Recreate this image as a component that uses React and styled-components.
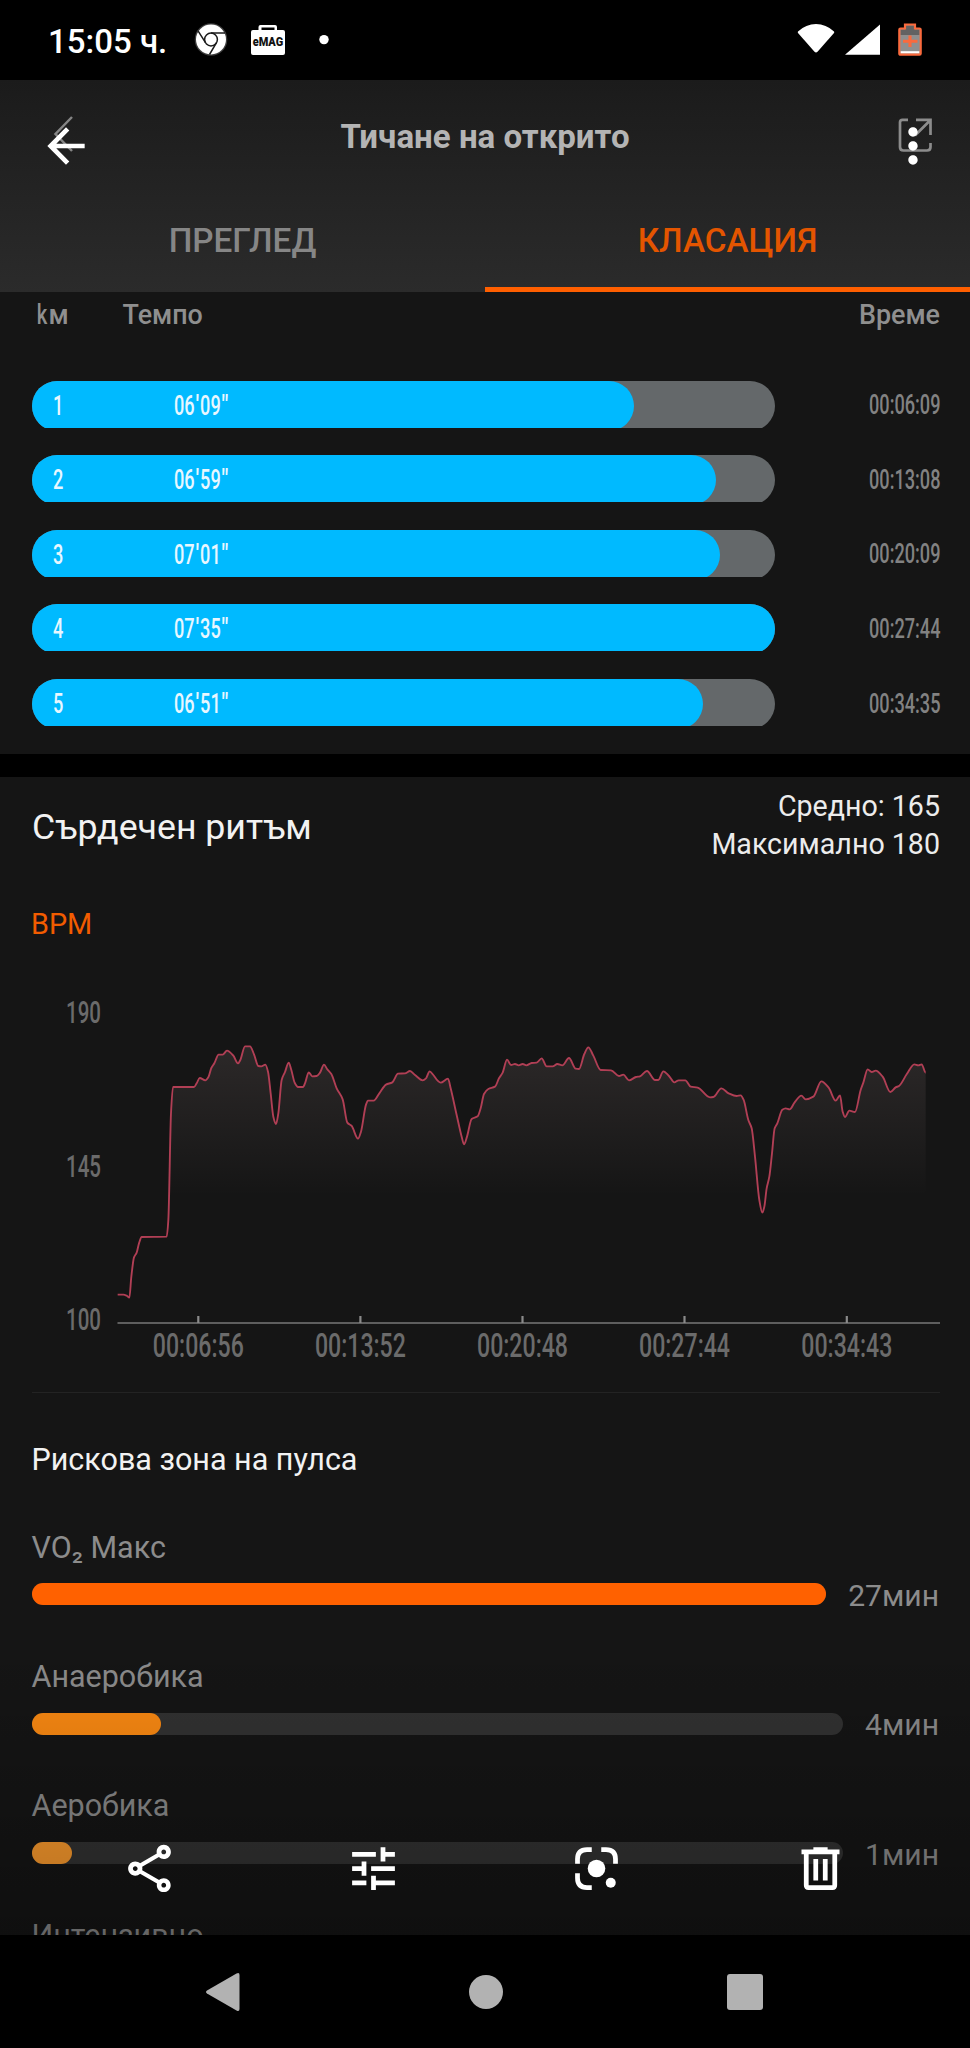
import React from 'react';
import styled, { createGlobalStyle } from 'styled-components';
import {
  MdArrowBack,
  MdMoreVert,
  MdOutlineShare,
  MdTune,
} from 'react-icons/md';

const GlobalStyle = createGlobalStyle`
  * {
    box-sizing: border-box;
  }
  body {
    margin: 0;
    background: #000;
  }
`;

const Screen = styled.div`
  position: relative;
  width: 970px;
  height: 2048px;
  display: flex;
  flex-direction: column;
  overflow: hidden;
  background: #000;
  color: #f2f2f2;
  font-family: Roboto, 'Noto Sans', sans-serif;
  white-space: nowrap;
`;

const StatusBar = styled.div`
  height: 80px;
  flex: none;
  display: flex;
  align-items: center;
  padding: 0 48px 0 48px;
`;

const Clock = styled.div`
  width: 141px;
  font-size: 33px;
  font-weight: 500;
  line-height: 40px;
  color: #fff;
  padding-top: 4px;
`;

const StatusIcon = styled.svg`
  display: block;
  flex: none;
  overflow: visible;
  margin-left: ${(props) => props.$gap || 0}px;
`;

const Spacer = styled.div`
  flex: 1;
`;

const Header = styled.div`
  height: 212px;
  flex: none;
  background: linear-gradient(#1b1b1b, #2b2b2b);
`;

const TitleBar = styled.div`
  height: 112px;
  display: flex;
  align-items: center;
  justify-content: space-between;
  padding: 0 36px 0 50px;
`;

const Title = styled.div`
  font-size: 33.1px;
  font-weight: 700;
  line-height: 40px;
  color: #b4b4b4;
  padding: 1px 4px 0 0;
`;

const Tabs = styled.div`
  height: 100px;
  display: flex;
`;

const Tab = styled.div`
  flex: 1;
  display: flex;
  align-items: center;
  justify-content: center;
  padding-top: 2px;
  font-size: 33.3px;
  font-weight: 500;
  color: ${(props) => (props.$active ? '#e45500' : '#868686')};
  border-bottom: 5px solid ${(props) => (props.$active ? '#ff5f00' : 'transparent')};
`;

const Content = styled.div`
  height: 1643px;
  flex: none;
  overflow: hidden;
`;

const Splits = styled.div`
  height: 461.5px;
  padding: 0 30px 0 31.5px;
  background: #151515;
`;

const SplitsHead = styled.div`
  height: 48px;
  display: flex;
  align-items: center;
  padding-bottom: 2px;
  font-size: 26.9px;
  font-weight: 500;
  color: #8f8f8f;
`;

const UnitCell = styled.div`
  width: 91px;
  padding-left: 3px;
`;

const Narrow = styled.span`
  display: inline-block;
  transform: scaleX(0.75);
`;

const SplitList = styled.div`
  display: flex;
  flex-direction: column;
  gap: 27.6px;
  margin-top: 40.7px;
`;

const SplitRow = styled.div`
  height: 47px;
  display: flex;
  align-items: center;
  justify-content: space-between;
`;

const SplitTrack = styled.div`
  width: 743.5px;
  height: 47px;
  overflow: hidden;
`;

const SplitRail = styled.div`
  height: 50px;
  border-radius: 25px;
  background: #64686a;
`;

const SplitFill = styled.div`
  height: 50px;
  border-radius: 25px;
  background: #00baff;
  display: flex;
  padding: 0 0 0 21px;
  line-height: 50px;
`;

// tall condensed figures
const Figures = styled.span`
  display: inline-block;
  font-size: 27.3px;
  font-weight: 500;
  color: ${(props) => props.$color || '#e8f7ff'};
  transform: scaleX(0.665);
  transform-origin: ${(props) => props.$origin || 'left'} center;
`;

const PaceMark = styled.span`
  display: inline-block;
  margin: 0 1.8px;
  transform: scaleX(1.25);
`;

const SplitTime = styled.div`
  padding-top: 2px;
`;

const SplitIndex = styled.div`
  width: 121px;
`;

const Divider = styled.div`
  height: 23.5px;
  background: #000;
`;

const HeartRate = styled.div`
  height: 1200px;
  background: #151515;
`;

const HeartHead = styled.div`
  display: flex;
  align-items: center;
  justify-content: space-between;
  padding: 9.7px 30px 0 32px;
`;

const HeartTitle = styled.div`
  font-size: 35.7px;
  line-height: 44px;
  padding-top: 3px;
`;

const HeartStats = styled.div`
  text-align: right;
  font-size: 28.6px;
  line-height: 38.8px;
  color: #ececec;
`;

const Unit = styled.div`
  margin: 39.8px 0 35.9px 31px;
  font-size: 28.8px;
  line-height: 40px;
  color: #f25c00;
`;

const ChartSvg = styled.svg`
  display: block;
`;

const Rule = styled.div`
  height: 1.5px;
  margin: 0 30px 0 31.5px;
  background: #232323;
`;

const Zones = styled.div`
  padding: 46.5px 30px 0 31.5px;
`;

const ZonesTitle = styled.div`
  font-size: 30.5px;
  line-height: 40px;
  margin-bottom: 47.6px;
`;

const ZoneItem = styled.div`
  height: 129.4px;
  color: #8c8c8c;
  font-size: 30.5px;
`;

const ZoneName = styled.div`
  line-height: 40px;
`;

const ZoneRow = styled.div`
  display: flex;
  align-items: center;
  gap: 22px;
  height: 22px;
  margin-top: 15.8px;
`;

const ZoneTrack = styled.div`
  flex: 1;
  height: 22px;
  border-radius: 11px;
  background: #323232;
`;

const ZoneFill = styled.div`
  height: 22px;
  border-radius: 11px;
  background: ${(props) => props.$color};
`;

const ZoneValue = styled.div`
  font-size: 30.1px;
  line-height: 22px;
  padding: 3px 1px 0 0;
`;

const BackButton = styled.div`
  position: absolute;
  left: 38px;
  top: 118px;
  color: #fff;
  line-height: 0;
`;

const MenuButton = styled.div`
  position: absolute;
  left: 885px;
  top: 118px;
  color: #fff;
  line-height: 0;
`;

const ActionBar = styled.div`
  position: absolute;
  left: 0;
  right: 0;
  top: 1640px;
  height: 295px;
  padding: 200px 38px 0;
  display: flex;
  background: linear-gradient(rgba(0, 0, 0, 0), rgba(0, 0, 0, 0.28));
`;

const Action = styled.div`
  flex: 1;
  display: flex;
  justify-content: center;
  color: #fff;
`;

const NavBar = styled.div`
  flex: 1;
  background: #000;
`;

const NavIcons = styled.div`
  display: flex;
  align-items: center;
  justify-content: space-between;
  height: 113px;
  padding: 0 207.5px 0 203.5px;
`;

const splits = [
  { km: 1, pace: ['06', '09'], time: '00:06:09', width: 602.5 },
  { km: 2, pace: ['06', '59'], time: '00:13:08', width: 684.5 },
  { km: 3, pace: ['07', '01'], time: '00:20:09', width: 688 },
  { km: 4, pace: ['07', '35'], time: '00:27:44', width: 743.5 },
  { km: 5, pace: ['06', '51'], time: '00:34:35', width: 671 },
];

const zones = [
  { name: 'VO₂ Макс', value: '27мин', percent: 100, color: '#ff6100' },
  { name: 'Анаеробика', value: '4мин', percent: 16, color: '#fc8a12' },
  { name: 'Аеробика', value: '1мин', percent: 5, color: '#fc9b2d' },
  { name: 'Интензивно', value: '', percent: 0, color: '#e0a040' },
];

// heart rate curve, three units per pixel
const pulse = [
  [53, 824], [70, 824], [80, 827], [88, 833], [94, 770], [102, 712], [110, 698], [117, 670],
  [125, 651], [200, 650], [205, 600], [213, 280], [219, 201], [282, 201], [290, 190], [299, 174],
  [316, 181], [325, 172], [334, 144], [343, 130], [356, 104], [368, 104], [381, 92], [400, 107],
  [414, 130], [421, 120], [435, 79], [450, 79], [462, 103], [475, 138], [484, 139], [496, 134],
  [504, 155], [512, 220], [520, 290], [528, 312], [535, 280], [545, 180], [555, 156], [566, 128],
  [574, 150], [584, 188], [594, 201], [609, 201], [616, 187], [626, 157], [637, 169], [650, 168],
  [660, 158], [672, 134], [682, 148], [694, 162], [710, 205], [728, 238], [742, 308], [755, 318],
  [774, 356], [783, 335], [798, 254], [804, 242], [821, 242], [838, 220], [858, 194], [877, 187],
  [894, 161], [915, 160], [930, 153], [945, 165], [968, 181], [978, 175], [989, 154], [1000, 165],
  [1013, 182], [1022, 188], [1044, 176], [1052, 205], [1070, 285], [1085, 350], [1092, 373],
  [1101, 350], [1115, 297], [1133, 289], [1142, 265], [1152, 222], [1165, 207], [1185, 200],
  [1197, 175], [1208, 158], [1221, 119], [1233, 135], [1245, 132], [1256, 136], [1268, 132],
  [1279, 136], [1295, 129], [1310, 128], [1325, 115], [1340, 139], [1358, 139], [1372, 132],
  [1387, 136], [1407, 114], [1427, 146], [1437, 147], [1453, 102], [1465, 82], [1480, 107],
  [1502, 150], [1533, 151], [1557, 168], [1570, 164], [1587, 181], [1608, 171], [1620, 169],
  [1641, 153], [1665, 180], [1675, 180], [1690, 154], [1707, 168], [1723, 187], [1736, 181],
  [1756, 181], [1772, 200], [1793, 203], [1830, 232], [1840, 231], [1864, 205], [1886, 220],
  [1910, 228], [1922, 226], [1931, 240], [1945, 300], [1955, 325], [1965, 410], [1978, 540],
  [1987, 578], [1993, 560], [2000, 505], [2008, 470], [2016, 400], [2024, 325], [2032, 310],
  [2047, 269], [2057, 265], [2069, 268], [2084, 247], [2104, 227], [2117, 238], [2140, 230],
  [2164, 184], [2186, 203], [2207, 242], [2220, 226], [2228, 275], [2235, 291], [2248, 272],
  [2265, 276], [2282, 210], [2290, 188], [2303, 148], [2315, 156], [2327, 152], [2348, 170],
  [2371, 216], [2387, 202], [2397, 198], [2420, 163], [2443, 133], [2455, 136], [2465, 133],
  [2477, 158],
];

const ticks = [
  { x: 198.3, label: '00:06:56' },
  { x: 360.4, label: '00:13:52' },
  { x: 522.5, label: '00:20:48' },
  { x: 684.5, label: '00:27:44' },
  { x: 846.8, label: '00:34:43' },
];

const levels = [
  { y: 43, label: '190' },
  { y: 196.5, label: '145' },
  { y: 349.5, label: '100' },
];

// cubic through every point, flat at the peaks so it never overshoots
const smooth = (points) => {
  const slope = (a, b) => (b[1] - a[1]) / (b[0] - a[0]);
  const tangents = points.map((point, i) => {
    if (i === 0 || i === points.length - 1) return 0;
    const before = slope(points[i - 1], point);
    const after = slope(point, points[i + 1]);
    return before * after <= 0 ? 0 : (2 * before * after) / (before + after);
  });
  return points.slice(1).reduce((path, [x, y], i) => {
    const [px, py] = points[i];
    const third = (x - px) / 3;
    return `${path}C${px + third} ${py + tangents[i] * third} ${x - third} ${
      y - tangents[i + 1] * third
    } ${x} ${y}`;
  }, `M${points[0].join(' ')}`);
};

const HeartChart = () => {
  const line = smooth(pulse);
  return (
    <ChartSvg width="970" height="412" viewBox="0 0 970 412">
      <defs>
        <linearGradient id="pulse" gradientUnits="userSpaceOnUse" x1="0" y1="80" x2="0" y2="530">
          <stop offset="0" stopColor="#ffd9d9" stopOpacity="0.1" />
          <stop offset="1" stopColor="#ffd9d9" stopOpacity="0" />
        </linearGradient>
      </defs>
      <g transform="translate(100 40) scale(0.33333)">
        <path d={`${line}V900H53Z`} fill="url(#pulse)" />
        <path d={line} fill="none" stroke="#b13f55" strokeWidth="5.6" strokeLinejoin="round" />
      </g>
      <path d="M117.5 343H940" stroke="#777" strokeWidth="1.7" />
      {ticks.map(({ x, label }) => (
        <g key={label}>
          <path d={`M${x} 336V343`} stroke="#8a8a8a" strokeWidth="2.2" />
          <text
            x={x - 45.5}
            y="376.7"
            fontSize="32.5"
            fontWeight="500"
            fill="#6b6b6b"
            textLength="91"
            lengthAdjust="spacingAndGlyphs"
          >
            {label}
          </text>
        </g>
      ))}
      {levels.map(({ y, label }) => (
        <text
          key={label}
          x="66"
          y={y}
          fontSize="31"
          fontWeight="500"
          fill="#6b6b6b"
          textLength="35"
          lengthAdjust="spacingAndGlyphs"
        >
          {label}
        </text>
      ))}
    </ChartSvg>
  );
};

const SplitItem = ({ km, pace, time, width }) => (
  <SplitRow>
    <SplitTrack>
      <SplitRail>
        <SplitFill style={{ width }}>
          <SplitIndex>
            <Figures>{km}</Figures>
          </SplitIndex>
          <Figures>
            {pace[0]}
            <PaceMark>&#39;</PaceMark>
            {pace[1]}
            <PaceMark>&quot;</PaceMark>
          </Figures>
        </SplitFill>
      </SplitRail>
    </SplitTrack>
    <SplitTime>
      <Figures $color="#828282" $origin="right">
        {time}
      </Figures>
    </SplitTime>
  </SplitRow>
);

const Zone = ({ name, value, percent, color }) => (
  <ZoneItem>
    <ZoneName>{name}</ZoneName>
    <ZoneRow>
      <ZoneTrack>
        <ZoneFill $color={color} style={{ width: `${percent}%` }} />
      </ZoneTrack>
      <ZoneValue>{value}</ZoneValue>
    </ZoneRow>
  </ZoneItem>
);

const StatusIcons = () => (
  <>
    <StatusIcon width="36" height="36" viewBox="0 0 36 36" $gap={4}>
      <circle cx="18" cy="17.5" r="16.3" fill="#3c3c3c" />
      <circle cx="18" cy="17.5" r="15" fill="#fff" />
      <g fill="none" stroke="#1a1a1a" strokeWidth="1.5">
        <circle cx="18" cy="17.5" r="6.4" />
        <path d="M18 11.1H32M12.5 20.7L5.2 9.2M23.5 20.7L16.5 32.5" />
      </g>
    </StatusIcon>
    <StatusIcon width="34" height="32" viewBox="0 0 34 32" $gap={22}>
      <path
        d="M2 6H7.5V3Q7.5 1 9.5 1H24Q26 1 26 3V6H32Q34 6 34 8V29Q34 31 32 31H2Q0 31 0 29V8Q0 6 2 6ZM10.5 6H23.5V3.5H10.5Z"
        fill="#fff"
        fillRule="evenodd"
      />
      <text
        x="1.7"
        y="22"
        fontSize="12"
        fontWeight="900"
        fill="#111"
        textLength="30.5"
        lengthAdjust="spacingAndGlyphs"
      >
        eMAG
      </text>
    </StatusIcon>
    <StatusIcon width="10" height="10" viewBox="0 0 10 10" $gap={34}>
      <circle cx="5" cy="4.6" r="4.7" fill="#fff" />
    </StatusIcon>
    <Spacer />
    <StatusIcon width="38" height="32" viewBox="0 0 38 32">
      <path
        d="M1 7.5Q9 0 19 0T37 7.5Q37.5 8.3 37 9L20.5 27.8Q19 29.2 17.5 27.8L1 9Q.5 8.3 1 7.5Z"
        fill="#fff"
      />
    </StatusIcon>
    <StatusIcon width="36" height="32" viewBox="0 0 36 32" $gap={10}>
      <path d="M35 .5V30.8H0Z" fill="#fff" />
    </StatusIcon>
    <StatusIcon width="24" height="34" viewBox="0 0 24 34" $gap={17.5}>
      <path
        d="M2.5 5.5H7V1.5H17V5.5H21.5Q22.7 5.5 22.7 6.7V30.5Q22.7 31.7 21.5 31.7H2.5Q1.3 31.7 1.3 30.5V6.7Q1.3 5.5 2.5 5.5Z"
        fill="#8f8f8f"
      />
      <path d="M7 2.5H17V6.5H21.5V12H2.5V6.5H7Z" fill="#626262" />
      <path d="M2.5 28.2H21.5V30.5H2.5Z" fill="#fff" />
      <path
        d="M2.5 5.5H7V1.5H17V5.5H21.5Q22.7 5.5 22.7 6.7V30.5Q22.7 31.7 21.5 31.7H2.5Q1.3 31.7 1.3 30.5V6.7Q1.3 5.5 2.5 5.5Z"
        fill="none"
        stroke="#fa6a3d"
        strokeWidth="2.2"
      />
      <path d="M12 12.5V24M5 18.2H19.5" stroke="#fa6a3d" strokeWidth="3.1" />
    </StatusIcon>
  </>
);

const LensIcon = () => (
  <svg width="57" height="57" viewBox="0 0 24 24">
    <g fill="none" stroke="#fff" strokeWidth="2">
      <path d="M4 10V8Q4 4 8 4H10M14 4H16Q20 4 20 8V10M4 14V16Q4 20 8 20H10" />
    </g>
    <circle cx="12" cy="12" r="3.7" fill="#fff" />
    <circle cx="18" cy="18" r="2.1" fill="#fff" />
  </svg>
);

const TrashIcon = () => (
  <svg width="57" height="57" viewBox="0 0 24 24">
    <path
      d="M9 3H15V4H20V6H19V19Q19 21 17 21H7Q5 21 5 19V6H4V4H9ZM7 6V19H17V6Z"
      fill="#fff"
      fillRule="evenodd"
    />
    <path d="M9 8H11V17H9ZM13 8H15V17H13Z" fill="#fff" />
  </svg>
);

export const App = () => {
  return (
    <>
      <GlobalStyle />
      <Screen>
        <StatusBar>
          <Clock>15:05 ч.</Clock>
          <StatusIcons />
        </StatusBar>

        <Header>
          <TitleBar>
            <svg width="26" height="40" viewBox="0 0 26 40">
              <path d="M22 1L5.5 18L22 35" fill="none" stroke="#858585" strokeWidth="2.5" />
            </svg>
            <Title>Тичане на открито</Title>
            <svg width="36" height="36" viewBox="0 0 36 36">
              <path
                d="M10 1.8H4.5Q2 1.8 2 4.3V29Q2 32.5 5.5 32.5H29Q32.5 32.5 32.5 29V25M18 1.8H32.5V17M32 2.5L17 17.5"
                fill="none"
                stroke="#8c8c8c"
                strokeWidth="2.7"
              />
            </svg>
          </TitleBar>
          <Tabs>
            <Tab>ПРЕГЛЕД</Tab>
            <Tab $active>КЛАСАЦИЯ</Tab>
          </Tabs>
        </Header>

        <Content>
          <Splits>
            <SplitsHead>
              <UnitCell>
                <Narrow>k</Narrow>м
              </UnitCell>
              <div>Темпо</div>
              <Spacer />
              <div>Време</div>
            </SplitsHead>
            <SplitList>
              {splits.map((split) => (
                <SplitItem key={split.km} {...split} />
              ))}
            </SplitList>
          </Splits>

          <Divider />

          <HeartRate>
            <HeartHead>
              <HeartTitle>Сърдечен ритъм</HeartTitle>
              <HeartStats>
                <div>Средно: 165</div>
                <div>Максимално 180</div>
              </HeartStats>
            </HeartHead>
            <Unit>BPM</Unit>
            <HeartChart />
            <Rule />
            <Zones>
              <ZonesTitle>Рискова зона на пулса</ZonesTitle>
              {zones.map((zone) => (
                <Zone key={zone.name} {...zone} />
              ))}
            </Zones>
          </HeartRate>
        </Content>

        <NavBar>
          <NavIcons>
            <svg width="41" height="40" viewBox="0 0 41 40">
              <path
                d="M35.5 3V37Q35.5 40 32.5 38.5L3 21.5Q1 20 3 18.5L32.5 1.5Q35.5 0 35.5 3Z"
                fill="#b2b2b2"
              />
            </svg>
            <svg width="36" height="36" viewBox="0 0 36 36">
              <circle cx="18" cy="18" r="17" fill="#b2b2b2" />
            </svg>
            <svg width="36" height="36" viewBox="0 0 36 36">
              <rect width="36" height="36" rx="3" fill="#b2b2b2" />
            </svg>
          </NavIcons>
        </NavBar>

        <BackButton>
          <MdArrowBack size={56} />
        </BackButton>
        <MenuButton>
          <MdMoreVert size={56} />
        </MenuButton>
        <ActionBar>
          <Action>
            <MdOutlineShare size={57} />
          </Action>
          <Action>
            <MdTune size={57} />
          </Action>
          <Action>
            <LensIcon />
          </Action>
          <Action>
            <TrashIcon />
          </Action>
        </ActionBar>
      </Screen>
    </>
  );
};

export default App;
